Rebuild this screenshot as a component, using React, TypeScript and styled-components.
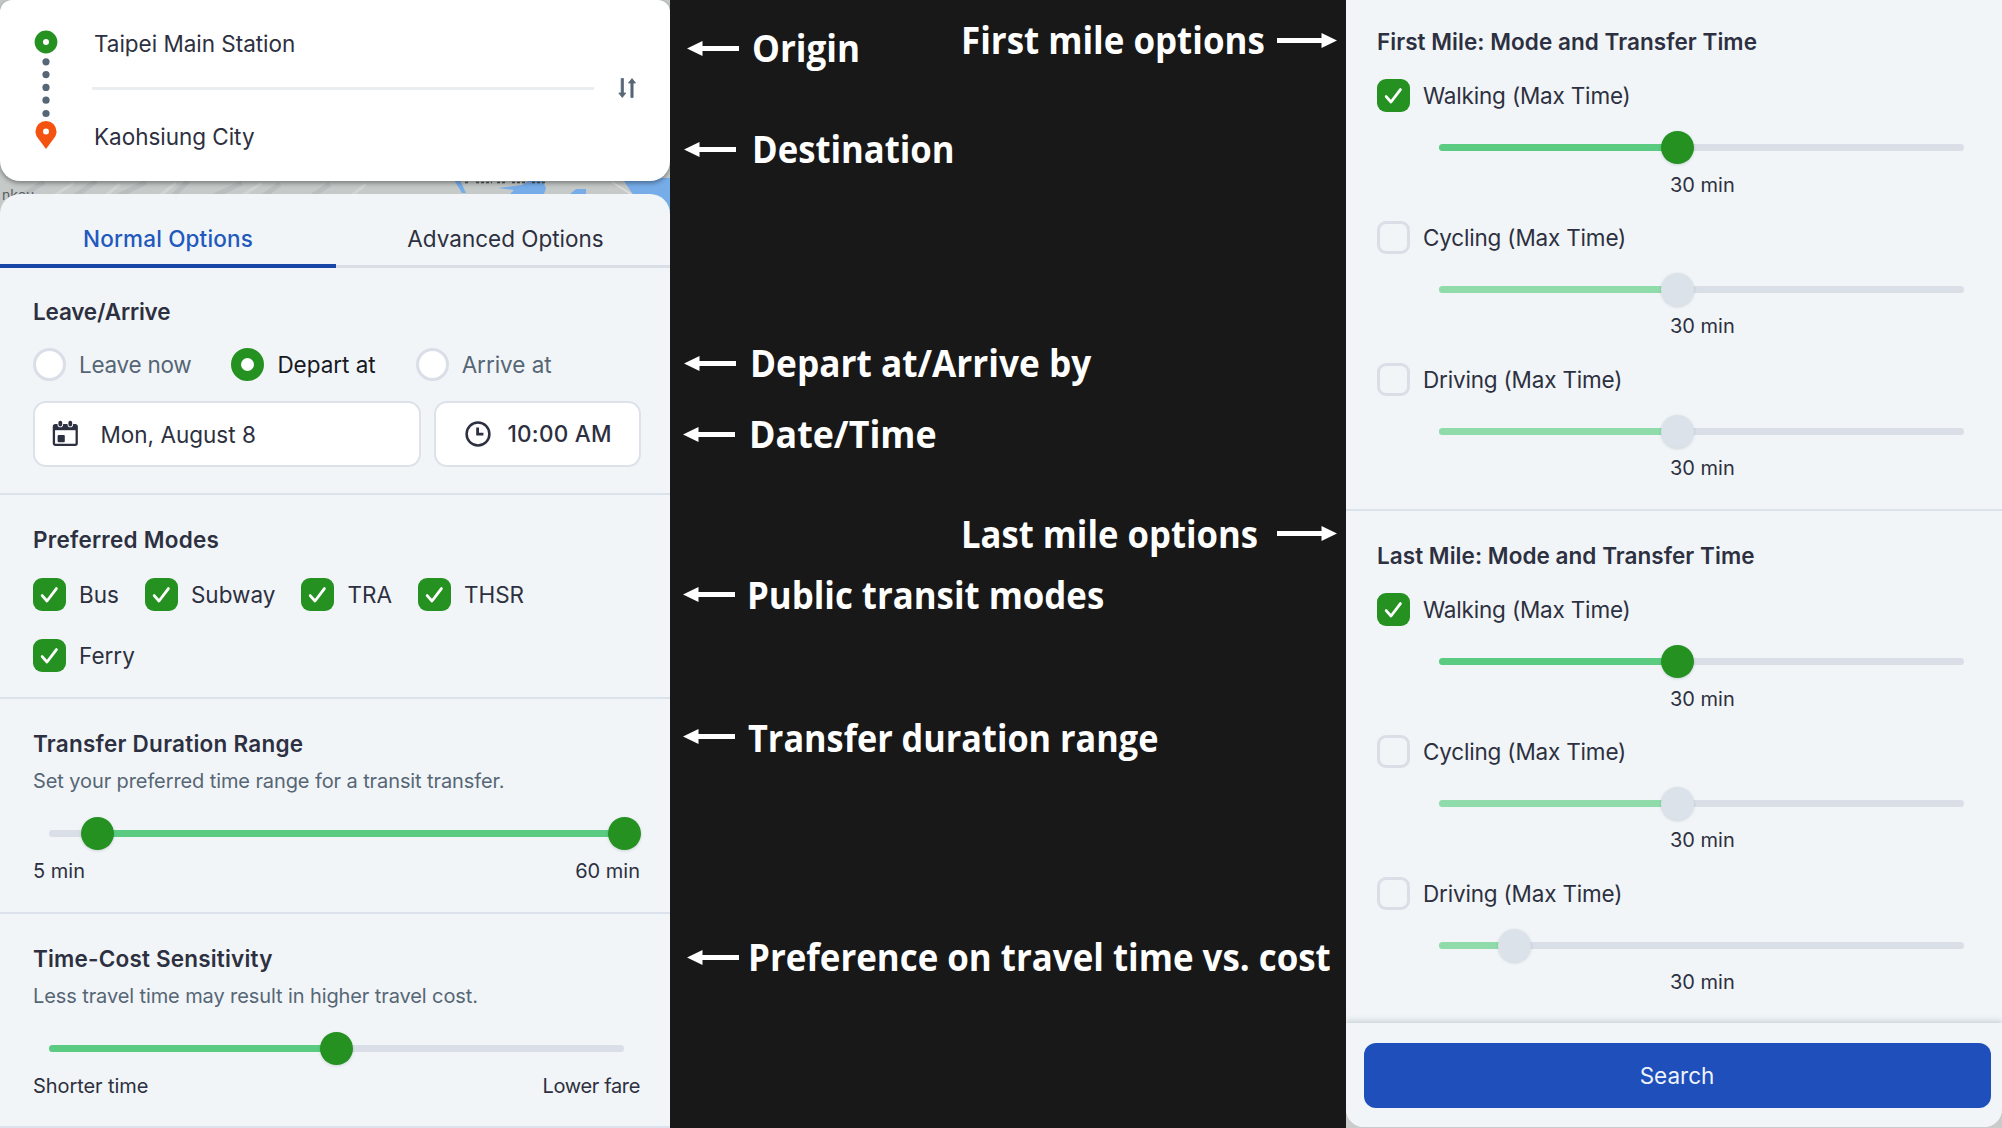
import React from "react";
import styled, { createGlobalStyle } from "styled-components";

const ink = "#2d3040";
const slate = "#566675";
const green = "#249121";
const mint = "#5acb80";
const rail = "#d9dee7";
const panel = "#f1f5f8";

const Global = createGlobalStyle`
  *, *::before, *::after { box-sizing: border-box; }
  html, body { margin: 0; padding: 0; background: #181818; }
  body { font-family: Inter, "Liberation Sans", sans-serif; color: ${ink}; overflow: hidden; }
`;

const Page = styled.div`
  display: grid;
  grid-template-columns: 670px 676px 656px;
  width: 2002px;
  height: 1128px;
  background: #181818;
  overflow: hidden;
`;

/* ---------- left column ---------- */
const LeftColumn = styled.div`
  display: grid;
  grid-template-rows: 181px 13px 934px;
  position: relative;
  overflow: hidden;
`;
const MapLayer = styled.svg`
  position: absolute;
  left: 0;
  top: 0;
  display: block;
`;
const TripCard = styled.section`
  grid-row: 1;
  position: relative;
  display: grid;
  grid-template-columns: 92px 503px 1fr;
  background: #fff;
  border-radius: 12px 12px 20px 20px;
  box-shadow: 0 2px 5px rgba(0, 0, 0, 0.4);
`;
const RouteMarks = styled.svg`
  display: block;
`;
const Places = styled.div`
  display: flex;
  flex-direction: column;
  padding-top: 19px;
`;
const Place = styled.div`
  height: 50px;
  padding-left: 2px;
  font-size: 22.5px;
  line-height: 50px;
  letter-spacing: -0.03px;
`;
const PlaceRule = styled.div`
  height: 3px;
  margin: 18px 1px 22px 0;
  background: #eaeef1;
`;
const SwapButton = styled.div`
  padding: 77px 0 0 21px;
`;
const Sheet = styled.section`
  grid-row: 3;
  position: relative;
  background: ${panel};
  border-radius: 20px 20px 0 0;
`;
const Tabs = styled.nav`
  display: grid;
  grid-template-columns: 336px 334px;
  height: 73px;
`;
const Tab = styled.div<{ $active?: boolean }>`
  padding: 20px 0 0 ${(p) => (p.$active ? 0 : 5)}px;
  text-align: center;
  font-size: 22.5px;
  line-height: 50px;
  letter-spacing: ${(p) => (p.$active ? 0.16 : 0)}px;
  font-weight: ${(p) => (p.$active ? 500 : 400)};
  color: ${(p) => (p.$active ? "#2259bd" : ink)};
  border-bottom: ${(p) => (p.$active ? "4px solid #1845a8" : "3px solid #d9dee7")};
`;
const Block = styled.div<{ $height: number }>`
  height: ${(p) => p.$height}px;
  padding: 0 30px 0 33px;
  border-bottom: 2px solid #dde3ec;
`;
const Heading = styled.h2<{ $top: number; $spacing?: number }>`
  margin: 0;
  padding-top: ${(p) => p.$top}px;
  font-size: 22.5px;
  font-weight: 600;
  line-height: 30px;
  letter-spacing: ${(p) => p.$spacing ?? 0}px;
`;
const Note = styled.p`
  margin: 7px 0 0;
  font-size: 20px;
  line-height: 30px;
  letter-spacing: -0.1px;
  color: ${slate};
`;
const Radios = styled.div`
  display: flex;
  gap: 40px;
  margin-top: 20.5px;
`;
const Choice = styled.label<{ $tone?: string; $spacing?: number }>`
  display: flex;
  align-items: center;
  gap: 13px;
  height: 33px;
  font-size: 22.5px;
  line-height: 33px;
  letter-spacing: ${(p) => p.$spacing ?? 0}px;
  white-space: nowrap;
  color: ${(p) => p.$tone ?? ink};
`;
const RadioDot = styled.span<{ $on?: boolean }>`
  width: 33px;
  height: 33px;
  border-radius: 50%;
  background: #fff;
  border: ${(p) => (p.$on ? `10px solid ${green}` : "3px solid #d9dee7")};
`;
const Fields = styled.div`
  display: grid;
  grid-template-columns: 388px 207px;
  gap: 13px;
  margin-top: 20px;
  margin-right: -2px;
`;
const Field = styled.div<{ $indent: number; $gap: number }>`
  display: flex;
  align-items: center;
  gap: ${(p) => p.$gap}px;
  height: 66px;
  padding-left: ${(p) => p.$indent}px;
  background: #fff;
  border: 2px solid #dde2ea;
  border-radius: 13px;
  font-size: 22.5px;
  white-space: nowrap;
`;
const FieldText = styled.span<{ $strong?: boolean }>`
  font-weight: ${(p) => (p.$strong ? 500 : 400)};
  letter-spacing: ${(p) => (p.$strong ? 0.25 : 0)}px;
  padding-top: ${(p) => (p.$strong ? 0 : 2)}px;
`;
const Modes = styled.div`
  display: flex;
  flex-wrap: wrap;
  gap: 28px 26px;
  margin-top: 22.5px;
`;
const Box = styled.span<{ $on?: boolean }>`
  display: grid;
  place-items: center;
  width: 33px;
  height: 33px;
  flex: none;
  border-radius: 9px;
  background: ${(p) => (p.$on ? green : "transparent")};
  border: ${(p) => (p.$on ? "none" : "3px solid #d9dee7")};
`;
const Ends = styled.div`
  display: flex;
  justify-content: space-between;
  margin-top: 6px;
  font-size: 20px;
  line-height: 30px;
`;
const End = styled.span<{ $spacing?: number }>`
  letter-spacing: ${(p) => p.$spacing ?? 0}px;
`;

/* ---------- slider ---------- */
const SliderBox = styled.div<{ $top: number; $left: number; $width: number }>`
  display: flex;
  align-items: center;
  width: ${(p) => p.$width}px;
  height: 34px;
  margin: ${(p) => p.$top}px 0 0 ${(p) => p.$left}px;
`;
const Rail = styled.div`
  position: relative;
  width: 100%;
  height: 7px;
  border-radius: 4px;
  background: ${rail};
`;
const Fill = styled.div<{ $off?: boolean }>`
  position: absolute;
  top: 0;
  height: 7px;
  border-radius: 4px;
  background: ${(p) => (p.$off ? "#8fdcaa" : mint)};
`;
const Thumb = styled.div<{ $off?: boolean }>`
  position: absolute;
  top: -13px;
  width: 33px;
  height: 33px;
  margin-left: -16.5px;
  border-radius: 50%;
  background: ${(p) => (p.$off ? "#dce2ea" : green)};
  box-shadow: 0 1px 3px rgba(40, 60, 80, 0.18);
`;

/* ---------- annotations ---------- */
const Annotations = styled.div`
  display: grid;
  grid-template-columns: 1fr;
  color: #fff;
  font-family: "Open Sans", "Noto Sans", sans-serif;
  font-weight: 700;
  font-size: 37px;
`;
const NoteList = styled.div`
  grid-area: 1 / 1;
  display: flex;
  flex-direction: column;
`;
const Callout = styled.div<{ $before: number; $indent: number; $gap: number }>`
  display: flex;
  align-items: center;
  gap: ${(p) => p.$gap}px;
  height: 40px;
  margin-top: ${(p) => p.$before}px;
  padding-left: ${(p) => p.$indent}px;
`;
const CalloutText = styled.span<{ $width: number; $squeeze: number; $drop?: number }>`
  width: ${(p) => p.$width}px;
  padding-top: ${(p) => (p.$drop ?? 0) * 2}px;
  line-height: 40px;
  white-space: nowrap;
  transform: scaleX(${(p) => p.$squeeze});
  transform-origin: left center;
`;
const ArrowSvg = styled.svg`
  display: block;
  flex: none;
`;

/* ---------- right column ---------- */
const RightColumn = styled.div`
  background: #c9cccb;
`;
const RightSheet = styled.section`
  height: 1127px;
  background: ${panel};
  border-radius: 0 0 18px 18px;
  overflow: hidden;
`;
const MileBlock = styled.div<{ $height: number; $last?: boolean }>`
  height: ${(p) => p.$height}px;
  padding-left: 31px;
  border-bottom: ${(p) => (p.$last ? "none" : "2px solid #dde3ec")};
`;
const MileRow = styled.div`
  height: 141.8px;
`;
const MileRows = styled.div`
  padding-top: 22px;
`;
const Minutes = styled.div`
  width: 650px;
  margin-top: 5px;
  font-size: 20px;
  line-height: 30px;
  padding-left: 293px;
`;
const Footer = styled.footer`
  position: relative;
  height: 104px;
  padding: 20px 11px 0 18px;
  background: ${panel};
  box-shadow: 0 -2px 6px rgba(60, 75, 90, 0.22);
`;
const SearchButton = styled.button`
  display: block;
  width: 627px;
  height: 65px;
  padding: 0 1px 1px 0;
  border: 0;
  border-radius: 12px;
  background: #1e4fba;
  color: #eef3fb;
  font-family: inherit;
  font-size: 22.5px;
  font-weight: 400;
`;

const Check = () => (
  <svg width="33" height="33" viewBox="0 0 33 33" fill="none" stroke="#fff" strokeWidth="2.8" strokeLinecap="round" strokeLinejoin="round">
    <path d="M9.2 17.6 L14 23 L23.4 10.6" />
  </svg>
);

const Checkbox = ({ label, on, spacing }: { label: string; on?: boolean; spacing?: number }) => (
  <Choice $spacing={spacing}>
    <Box $on={on}>{on && <Check />}</Box>
    {label}
  </Choice>
);

type SliderProps = { top: number; left: number; width: number; from?: number; to: number; range?: boolean; off?: boolean };
const Slider = ({ top, left, width, from = 0, to, range, off }: SliderProps) => (
  <SliderBox $top={top} $left={left} $width={width}>
    <Rail>
      <Fill $off={off} style={{ left: `${from}%`, width: `${to - from}%` }} />
      {range && <Thumb $off={off} style={{ left: `${from}%` }} />}
      <Thumb $off={off} style={{ left: `${to}%` }} />
    </Rail>
  </SliderBox>
);

const LeftArrow = () => (
  <ArrowSvg width="52" height="16" viewBox="0 0 52 16" fill="#fff">
    <path d="M0 8.5 L15.5 1 V6.1 H52 V10.9 H15.5 V16 Z" />
  </ArrowSvg>
);
const RightArrow = () => (
  <ArrowSvg width="60" height="16" viewBox="0 0 60 16" fill="#fff">
    <path d="M60 8.5 L44.5 1 V6.1 H0 V10.9 H44.5 V16 Z" />
  </ArrowSvg>
);

const leftNotes = [
  { text: "Origin", before: 28, indent: 16.5, gap: 13, width: 107, squeeze: 0.948, drop: 0 },
  { text: "Destination", before: 61, indent: 13.5, gap: 16, width: 201, squeeze: 0.937, drop: -0 },
  { text: "Depart at/Arrive by", before: 174, indent: 13.5, gap: 14, width: 341, squeeze: 0.952, drop: 0 },
  { text: "Date/Time", before: 31, indent: 13, gap: 14, width: 185, squeeze: 0.968, drop: 0 },
  { text: "Public transit modes", before: 120, indent: 13, gap: 12, width: 357, squeeze: 0.94, drop: 1 },
  { text: "Transfer duration range", before: 102, indent: 13, gap: 13, width: 411, squeeze: 0.926, drop: 2 },
  { text: "Preference on travel time vs. cost", before: 181, indent: 16.5, gap: 9, width: 584, squeeze: 0.942, drop: 0 },
];

const mileRows = [
  { label: "Walking (Max Time)", on: true },
  { label: "Cycling (Max Time)", on: false },
  { label: "Driving (Max Time)", on: false },
];

const Mile = ({ title, height, top, last }: { title: string; height: number; top: number; last?: boolean }) => (
  <MileBlock $height={height} $last={last}>
    <Heading $top={top} $spacing={0.05}>{title}</Heading>
    <MileRows>
      {mileRows.map((row, i) => (
        <MileRow key={row.label}>
          <Checkbox label={row.label} on={row.on} spacing={-0.18} />
          <Slider top={18.5} left={62} width={525} to={last && i === 2 ? 14.3 : 45.4} off={!row.on} />
          <Minutes>30 min</Minutes>
        </MileRow>
      ))}
    </MileRows>
  </MileBlock>
);

const App = () => (
  <>
    <Global />
    <Page>
      <LeftColumn>
        <MapLayer width="670" height="230" viewBox="0 0 670 230">
          <rect width="670" height="230" fill="#c5c9c8" />
          <path d="M22 196 L44 182 M74 197 L96 181 M118 196 L146 182 M172 197 L188 181 M214 196 L242 183 M262 197 L280 184 M312 196 L330 184" fill="none" stroke="#b8bebd" strokeWidth="5" />
          <path d="M52 197 L74 183 M104 197 L120 184 M158 197 L176 183 M240 197 L262 183 M350 197 L366 184" stroke="#d0d4d3" strokeWidth="3" />
          <path d="M454 180 h6 l6 13 h-4 Z M498 188 l24 -3 l8 -5 h12 l4 8 l-2 6 h-34 l4 -4 Z M570 194 l6 -5 h10 v5 Z M622 178 h48 v40 h-26 l-10 -22 Z" fill="#76ade9" />
          <path d="M612 182 L634 196" stroke="#dadddc" strokeWidth="2" />
          <path d="M465 182.5 h4 M476 182.5 h16 M497 182.5 h9 M512 182.5 h14 M532 182.5 h14" stroke="#4b5054" strokeWidth="1.6" strokeDasharray="3 2" />
          <text x="2" y="200" fontSize="14" fill="#565c60">nkou</text>
        </MapLayer>
        <TripCard>
          <RouteMarks width="92" height="181" viewBox="0 0 92 181">
            <circle cx="46" cy="42" r="11.4" fill={green} />
            <circle cx="46" cy="42" r="3" fill="#fff" />
            {[61.8, 74.6, 87.4, 100.2, 113.5].map((y) => (
              <circle key={y} cx="46" cy={y} r="3.6" fill="#566675" />
            ))}
            <path d="M46 149 L38.2 138.6 C36.6 136.4 35.5 134 35.5 131.4 A10.5 10.5 0 0 1 56.5 131.4 C56.5 134 55.4 136.4 53.8 138.6 Z" fill="#f4520f" />
            <circle cx="46" cy="131.4" r="3" fill="#fff" />
          </RouteMarks>
          <Places>
            <Place>Taipei Main Station</Place>
            <PlaceRule />
            <Place>Kaohsiung City</Place>
          </Places>
          <SwapButton>
            <svg width="22" height="22" viewBox="0 0 22 22" fill="#566675" stroke="#566675" strokeWidth="0.8" strokeLinejoin="round">
              <path d="M5.2 1.5 H7.4 V16 H9.8 L6.3 20.5 L2.8 16 H5.2 Z" />
              <path d="M14.9 20.5 V6 H12.5 L16 1.5 L19.5 6 H17.1 V20.5 Z" />
            </svg>
          </SwapButton>
        </TripCard>
        <Sheet>
          <Tabs>
            <Tab $active>Normal Options</Tab>
            <Tab>Advanced Options</Tab>
          </Tabs>
          <Block $height={228}>
            <Heading $top={30} $spacing={-0.18}>Leave/Arrive</Heading>
            <Radios>
              <Choice $tone={slate} $spacing={-0.27}><RadioDot />Leave now</Choice>
              <Choice $tone="#17191f" $spacing={-0.03}><RadioDot $on />Depart at</Choice>
              <Choice $tone={slate} $spacing={-0.03}><RadioDot />Arrive at</Choice>
            </Radios>
            <Fields>
              <Field $indent={17} $gap={20.5}>
                <svg width="28" height="28" viewBox="0 0 28 28" fill="none" stroke={ink}>
                  <rect x="1.9" y="5.2" width="22.8" height="19.6" rx="1.5" strokeWidth="2.3" />
                  <path d="M1.5 7.6 H25" strokeWidth="5.2" />
                  <path d="M8.3 2 V4.4 M18.3 2 V4.4" stroke="#fff" strokeWidth="5.6" strokeLinecap="round" />
                  <path d="M8.3 2.6 V4.6 M18.3 2.6 V4.6" strokeWidth="3.8" strokeLinecap="round" />
                  <rect x="5.6" y="15" width="7.2" height="7.2" rx="1" fill={ink} stroke="none" />
                </svg>
                <FieldText>Mon, August 8</FieldText>
              </Field>
              <Field $indent={29} $gap={16.5}>
                <svg width="26" height="26" viewBox="0 0 26 26" fill="none" stroke={ink} strokeWidth="2.5">
                  <circle cx="13" cy="13" r="11.4" />
                  <path d="M12.6 6.6 V13.2 H18.4" strokeWidth="2.8" />
                </svg>
                <FieldText $strong>10:00 AM</FieldText>
              </Field>
            </Fields>
          </Block>
          <Block $height={204}>
            <Heading $top={30} $spacing={0.24}>Preferred Modes</Heading>
            <Modes>
              {["Bus", "Subway", "TRA", "THSR", "Ferry"].map((m) => (
                <Checkbox key={m} label={m} on />
              ))}
            </Modes>
          </Block>
          <Block $height={215}>
            <Heading $top={30} $spacing={0.24}>Transfer Duration Range</Heading>
            <Note>Set your preferred time range for a transit transfer.</Note>
            <Slider top={20} left={16} width={575} from={8.4} to={100} range />
            <Ends><End>5 min</End><End>60 min</End></Ends>
          </Block>
          <Block $height={214}>
            <Heading $top={30} $spacing={0.19}>Time-Cost Sensitivity</Heading>
            <Note>Less travel time may result in higher travel cost.</Note>
            <Slider top={20} left={16} width={575} to={50} />
            <Ends><End $spacing={-0.08}>Shorter time</End><End $spacing={-0.35}>Lower fare</End></Ends>
          </Block>
        </Sheet>
      </LeftColumn>

      <Annotations>
        <NoteList>
          {leftNotes.map((n) => (
            <Callout key={n.text} $before={n.before} $indent={n.indent} $gap={n.gap}>
              <LeftArrow />
              <CalloutText $width={n.width} $squeeze={n.squeeze} $drop={n.drop}>{n.text}</CalloutText>
            </Callout>
          ))}
        </NoteList>
        <NoteList>
          <Callout $before={20} $indent={291} $gap={16}>
            <CalloutText $width={300} $squeeze={0.943}>First mile options</CalloutText>
            <RightArrow />
          </Callout>
          <Callout $before={453} $indent={291} $gap={16}>
            <CalloutText $width={300} $squeeze={0.937} $drop={1}>Last mile options</CalloutText>
            <RightArrow />
          </Callout>
        </NoteList>
      </Annotations>

      <RightColumn>
        <RightSheet>
          <Mile title="First Mile: Mode and Transfer Time" height={511} top={27} />
          <Mile title="Last Mile: Mode and Transfer Time" height={512} top={30} last />
          <Footer>
            <SearchButton>Search</SearchButton>
          </Footer>
        </RightSheet>
      </RightColumn>
    </Page>
  </>
);

export default App;
